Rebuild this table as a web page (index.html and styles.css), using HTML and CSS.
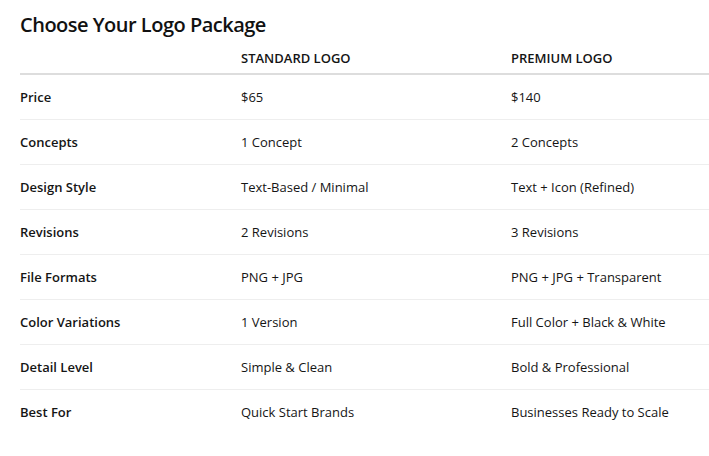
FILE: index.html
```html
<!DOCTYPE html>
<html lang="en">
<head>
<meta charset="utf-8">
<title>Choose Your Logo Package</title>
<link rel="stylesheet" href="styles.css">
</head>
<body>
<div class="page">
  <h2 class="title">Choose Your Logo Package</h2>
  <table class="compare">
    <colgroup>
      <col class="c-label">
      <col class="c-std">
      <col class="c-prem">
    </colgroup>
    <thead>
      <tr>
        <th></th>
        <th>STANDARD LOGO</th>
        <th>PREMIUM LOGO</th>
      </tr>
    </thead>
    <tbody>
      <tr><td class="label">Price</td><td>$65</td><td>$140</td></tr>
      <tr><td class="label">Concepts</td><td>1 Concept</td><td>2 Concepts</td></tr>
      <tr><td class="label">Design Style</td><td>Text-Based / Minimal</td><td>Text + Icon (Refined)</td></tr>
      <tr><td class="label">Revisions</td><td>2 Revisions</td><td>3 Revisions</td></tr>
      <tr><td class="label">File Formats</td><td>PNG + JPG</td><td>PNG + JPG + Transparent</td></tr>
      <tr><td class="label">Color Variations</td><td>1 Version</td><td>Full Color + Black &amp; White</td></tr>
      <tr><td class="label">Detail Level</td><td>Simple &amp; Clean</td><td>Bold &amp; Professional</td></tr>
      <tr class="last"><td class="label">Best For</td><td>Quick Start Brands</td><td>Businesses Ready to Scale</td></tr>
    </tbody>
  </table>
</div>
</body>
</html>
```

FILE: styles.css
```css
html, body {
  margin: 0;
  padding: 0;
  background: #ffffff;
}
body {
  font-family: "Open Sans", "Noto Sans", sans-serif;
  color: #151515;
}
.page {
  padding: 13px 0 0 20px;
}
.title {
  margin: 0 0 6px 0;
  font-size: 20px;
  line-height: 24px;
  font-weight: 600;
  letter-spacing: -0.5px;
  color: #111;
}
.compare {
  width: 689px;
  border-collapse: collapse;
  table-layout: fixed;
  font-size: 13px;
}
.c-label { width: 221px; }
.c-std { width: 270px; }
.c-prem { width: 198px; }
.compare th {
  text-align: left;
  font-weight: 600;
  line-height: 18px;
  padding: 6px 0;
  border-bottom: 2px solid #dddddd;
  white-space: nowrap;
}
.compare td {
  padding: 13px 0;
  line-height: 18px;
  border-bottom: 1px solid #eeeeee;
  white-space: nowrap;
}
.compare tr.last td {
  border-bottom: none;
}
.compare td.label {
  font-weight: 600;
}
```
